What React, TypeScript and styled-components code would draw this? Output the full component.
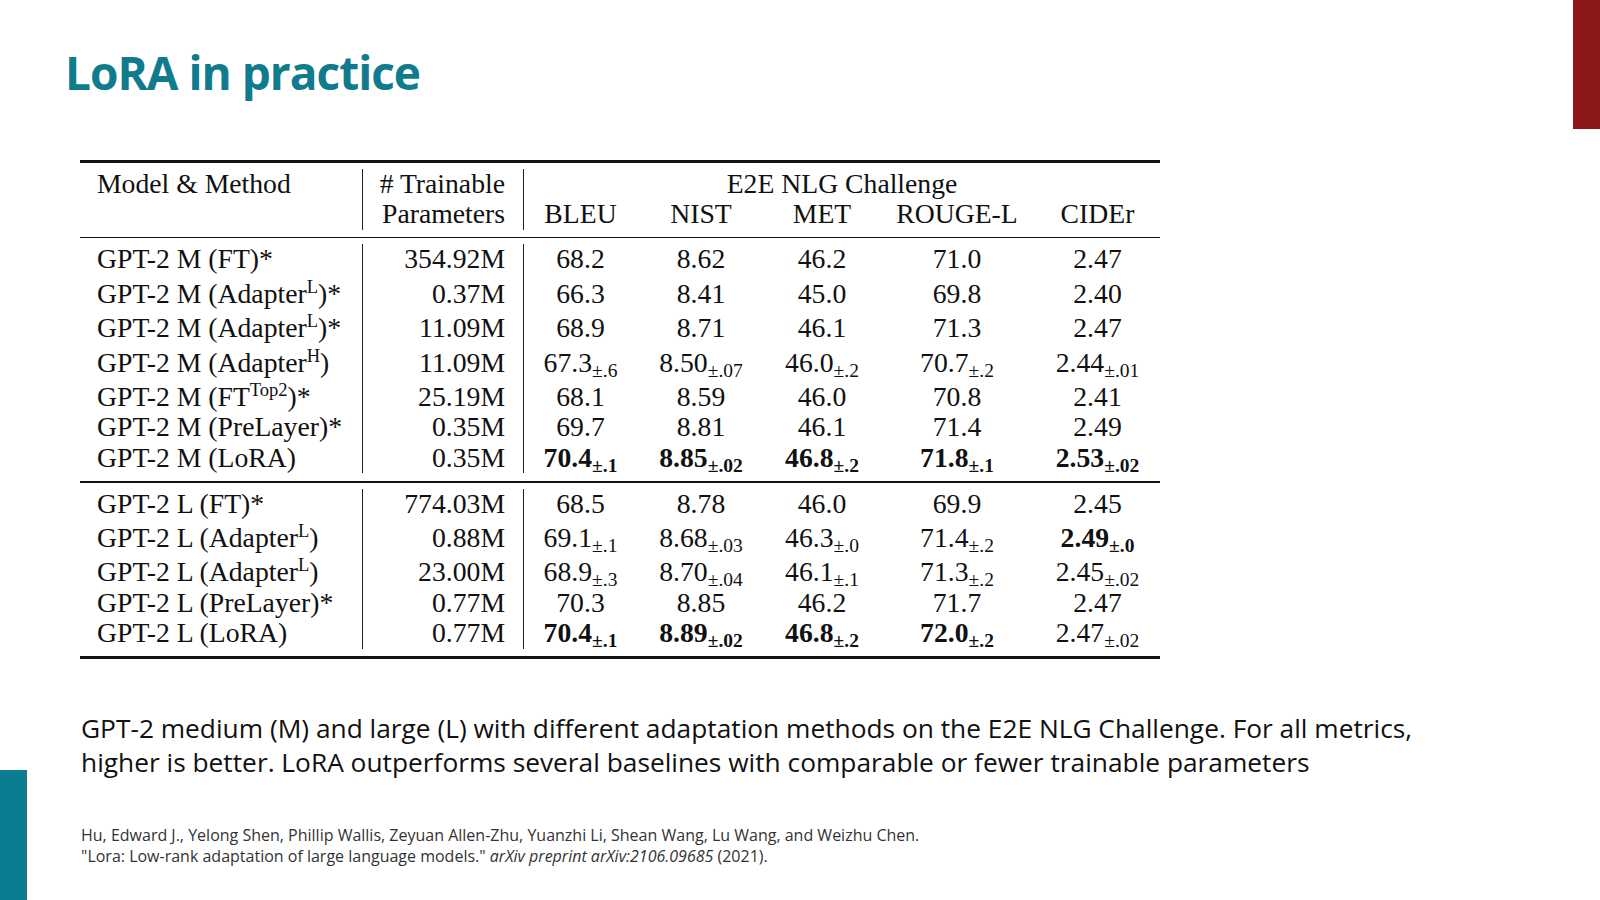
import React from 'react'
import styled, { createGlobalStyle } from 'styled-components'

const GlobalStyle = createGlobalStyle`
  html, body {
    margin: 0;
    padding: 0;
    background: #ffffff;
  }
`

const Slide = styled.div`
  width: 1600px;
  height: 900px;
  display: grid;
  grid-template-columns: 27px 1fr 27px;
  background: #ffffff;
  overflow: hidden;
`

const LeftGutter = styled.div`
  display: flex;
  flex-direction: column;
  justify-content: flex-end;
`

const RightGutter = styled.div`
  display: flex;
  flex-direction: column;
`

const Accent = styled.div<{ $color: string; $height: number }>`
  width: 27px;
  height: ${({ $height }) => $height}px;
  background: ${({ $color }) => $color};
`

const Content = styled.div`
  display: flex;
  flex-direction: column;
`

const Title = styled.h1`
  margin: 42px 0 0 38px;
  font-family: 'Open Sans', sans-serif;
  font-weight: 700;
  font-size: 46px;
  line-height: 60px;
  letter-spacing: -1px;
  color: #0f7b8d;
`

const Table = styled.div`
  margin: 58px 0 0 53px;
  width: 1080px;
  font-family: 'Liberation Serif', 'Times New Roman', serif;
  font-size: 27.7px;
  color: #111111;
`

const Rule = styled.div<{ $thick?: boolean }>`
  height: ${({ $thick }) => ($thick ? 3 : 1.5)}px;
  background: #111111;
`

const Section = styled.div<{ $top: number; $bottom: number }>`
  padding: ${({ $top }) => $top}px 0 ${({ $bottom }) => $bottom}px;
`

const Row = styled.div<{ $sup?: boolean }>`
  display: grid;
  grid-template-columns: 282px 161px 114px 128px 114px 156px 125px;
  line-height: 30.4px;
  white-space: nowrap;

  & > div {
    padding-top: ${({ $sup }) => ($sup ? 4 : 0)}px;
  }
`

const NameCell = styled.div`
  padding-left: 17px;
`

const ParamCell = styled.div`
  text-align: right;
  padding-right: 18px;
  border-left: 1.5px solid #222222;
`

const MetricCell = styled.div<{ $first?: boolean; $span?: number; $bold?: boolean }>`
  text-align: center;
  font-weight: ${({ $bold }) => ($bold ? 700 : 400)};
  border-left: ${({ $first }) => ($first ? '1.5px solid #222222' : 'none')};
  grid-column: span ${({ $span }) => $span ?? 1};
`

const Sup = styled.sup`
  font-size: 18.5px;
  line-height: 0;
  vertical-align: 10px;
`

const Sub = styled.span`
  font-size: 19.5px;
  line-height: 0;
  vertical-align: -5px;
`

const Caption = styled.p`
  margin: 52px 0 0 54px;
  font-family: 'Open Sans', sans-serif;
  font-size: 26.3px;
  line-height: 34px;
  color: #111111;
`

const Citation = styled.p`
  margin: 46px 0 0 54px;
  font-family: 'Open Sans', sans-serif;
  font-size: 16px;
  line-height: 21.5px;
  color: #333333;

  em {
    font-style: italic;
  }
`

type Metric = { v: string; s?: string; b?: boolean }
type Entry = { base: string; sup?: string; tail?: string; params: string; m: Metric[] }

const medium: Entry[] = [
  { base: 'GPT-2 M (FT)*', params: '354.92M', m: [{ v: '68.2' }, { v: '8.62' }, { v: '46.2' }, { v: '71.0' }, { v: '2.47' }] },
  { base: 'GPT-2 M (Adapter', sup: 'L', tail: ')*', params: '0.37M', m: [{ v: '66.3' }, { v: '8.41' }, { v: '45.0' }, { v: '69.8' }, { v: '2.40' }] },
  { base: 'GPT-2 M (Adapter', sup: 'L', tail: ')*', params: '11.09M', m: [{ v: '68.9' }, { v: '8.71' }, { v: '46.1' }, { v: '71.3' }, { v: '2.47' }] },
  {
    base: 'GPT-2 M (Adapter', sup: 'H', tail: ')', params: '11.09M',
    m: [{ v: '67.3', s: '±.6' }, { v: '8.50', s: '±.07' }, { v: '46.0', s: '±.2' }, { v: '70.7', s: '±.2' }, { v: '2.44', s: '±.01' }],
  },
  { base: 'GPT-2 M (FT', sup: 'Top2', tail: ')*', params: '25.19M', m: [{ v: '68.1' }, { v: '8.59' }, { v: '46.0' }, { v: '70.8' }, { v: '2.41' }] },
  { base: 'GPT-2 M (PreLayer)*', params: '0.35M', m: [{ v: '69.7' }, { v: '8.81' }, { v: '46.1' }, { v: '71.4' }, { v: '2.49' }] },
  {
    base: 'GPT-2 M (LoRA)', params: '0.35M',
    m: [
      { v: '70.4', s: '±.1', b: true },
      { v: '8.85', s: '±.02', b: true },
      { v: '46.8', s: '±.2', b: true },
      { v: '71.8', s: '±.1', b: true },
      { v: '2.53', s: '±.02', b: true },
    ],
  },
]

const large: Entry[] = [
  { base: 'GPT-2 L (FT)*', params: '774.03M', m: [{ v: '68.5' }, { v: '8.78' }, { v: '46.0' }, { v: '69.9' }, { v: '2.45' }] },
  {
    base: 'GPT-2 L (Adapter', sup: 'L', tail: ')', params: '0.88M',
    m: [{ v: '69.1', s: '±.1' }, { v: '8.68', s: '±.03' }, { v: '46.3', s: '±.0' }, { v: '71.4', s: '±.2' }, { v: '2.49', s: '±.0', b: true }],
  },
  {
    base: 'GPT-2 L (Adapter', sup: 'L', tail: ')', params: '23.00M',
    m: [{ v: '68.9', s: '±.3' }, { v: '8.70', s: '±.04' }, { v: '46.1', s: '±.1' }, { v: '71.3', s: '±.2' }, { v: '2.45', s: '±.02' }],
  },
  { base: 'GPT-2 L (PreLayer)*', params: '0.77M', m: [{ v: '70.3' }, { v: '8.85' }, { v: '46.2' }, { v: '71.7' }, { v: '2.47' }] },
  {
    base: 'GPT-2 L (LoRA)', params: '0.77M',
    m: [
      { v: '70.4', s: '±.1', b: true },
      { v: '8.89', s: '±.02', b: true },
      { v: '46.8', s: '±.2', b: true },
      { v: '72.0', s: '±.2', b: true },
      { v: '2.47', s: '±.02' },
    ],
  },
]

const metrics = ['BLEU', 'NIST', 'MET', 'ROUGE-L', 'CIDEr']

const ResultRow = ({ row }: { row: Entry }) => (
  <Row $sup={!!row.sup}>
    <NameCell>
      {row.base}
      {row.sup && <Sup>{row.sup}</Sup>}
      {row.tail}
    </NameCell>
    <ParamCell>{row.params}</ParamCell>
    {row.m.map((x, i) => (
      <MetricCell key={i} $first={i === 0} $bold={x.b}>
        {x.v}
        {x.s && <Sub>{x.s}</Sub>}
      </MetricCell>
    ))}
  </Row>
)

const App = () => (
  <>
    <GlobalStyle />
    <Slide>
      <LeftGutter>
        <Accent $color="#0b7d91" $height={130} />
      </LeftGutter>
      <Content>
        <Title>LoRA in practice</Title>
        <Table>
          <Rule $thick />
          <Section $top={6} $bottom={7}>
            <Row>
              <NameCell>Model &amp; Method</NameCell>
              <ParamCell># Trainable</ParamCell>
              <MetricCell $first $span={5}>E2E NLG Challenge</MetricCell>
            </Row>
            <Row>
              <NameCell />
              <ParamCell>Parameters</ParamCell>
              {metrics.map((name, i) => (
                <MetricCell key={name} $first={i === 0}>{name}</MetricCell>
              ))}
            </Row>
          </Section>
          <Rule />
          <Section $top={6} $bottom={8}>
            {medium.map((row, i) => <ResultRow key={i} row={row} />)}
          </Section>
          <Rule />
          <Section $top={6} $bottom={7}>
            {large.map((row, i) => <ResultRow key={i} row={row} />)}
          </Section>
          <Rule $thick />
        </Table>
        <Caption>
          GPT-2 medium (M) and large (L) with different adaptation methods on the E2E NLG Challenge. For all metrics,
          <br />
          higher is better. LoRA outperforms several baselines with comparable or fewer trainable parameters
        </Caption>
        <Citation>
          Hu, Edward J., Yelong Shen, Phillip Wallis, Zeyuan Allen-Zhu, Yuanzhi Li, Shean Wang, Lu Wang, and Weizhu Chen.
          <br />
          "Lora: Low-rank adaptation of large language models." <em>arXiv preprint arXiv:2106.09685</em> (2021).
        </Citation>
      </Content>
      <RightGutter>
        <Accent $color="#8b1717" $height={129} />
      </RightGutter>
    </Slide>
  </>
)

export default App
